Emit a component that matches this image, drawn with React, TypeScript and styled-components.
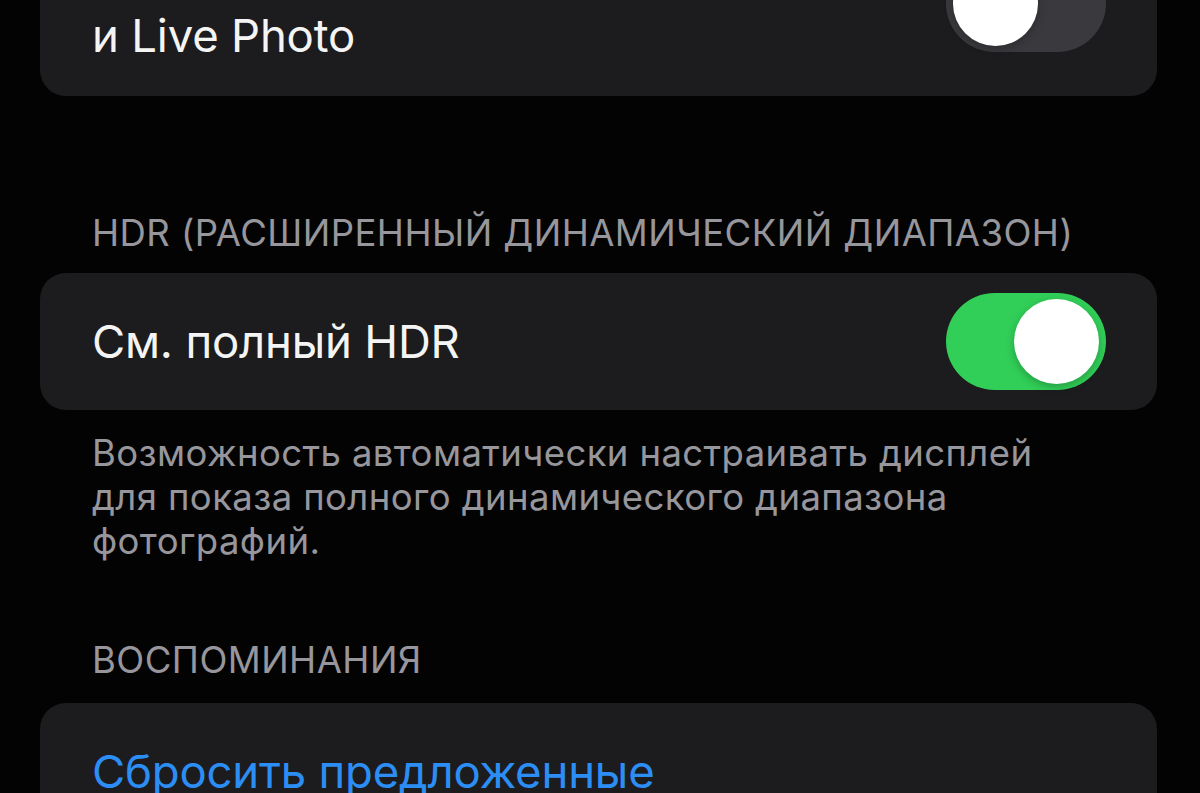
import styled, { createGlobalStyle } from 'styled-components';

const GlobalStyle = createGlobalStyle`
  html, body {
    margin: 0;
    padding: 0;
    background: #030303;
    overflow: hidden;
  }
  body {
    font-family: Inter, "Noto Sans", "Liberation Sans", sans-serif;
    -webkit-font-smoothing: antialiased;
  }
`;

const Screen = styled.div`
  width: 1200px;
  height: 793px;
  overflow: hidden;
  background: #030303;
`;

const List = styled.div`
  display: flex;
  flex-direction: column;
  padding: 0 43px 0 40px;
  margin-top: -89px;
`;

const Card = styled.div`
  background: #1c1c1e;
  border-radius: 26px;
  overflow: hidden;
`;

const Row = styled.div<{ $height: number }>`
  display: flex;
  align-items: center;
  justify-content: space-between;
  min-height: ${(p) => p.$height}px;
  padding: 0 51px 0 52px;
  box-sizing: border-box;
`;

const Label = styled.span<{ $accent?: boolean; $lines?: number }>`
  font-size: 45.5px;
  line-height: ${(p) => ((p.$lines ?? 1) > 1 ? 64 : 58)}px;
  letter-spacing: -0.2px;
  color: ${(p) => (p.$accent ? '#2c8ef4' : '#f4f4f4')};
`;

const SectionHeader = styled.div<{ $top: number }>`
  margin: ${(p) => p.$top}px 0 0 52px;
  font-size: 36.5px;
  line-height: 44px;
  color: #96969c;
  letter-spacing: 0.45px;
  text-transform: uppercase;
`;

const Footer = styled.div`
  margin: 21px 90px 0 52px;
  font-size: 36.5px;
  line-height: 44px;
  color: #96969c;
  letter-spacing: 0.4px;
`;

const Gap = styled.div<{ $size: number }>`
  height: ${(p) => p.$size}px;
`;

const Track = styled.div<{ $on: boolean }>`
  flex: none;
  width: 160px;
  height: 97px;
  border-radius: 49px;
  background: ${(p) => (p.$on ? '#31cf58' : '#3a3a3e')};
  display: flex;
  align-items: center;
  justify-content: ${(p) => (p.$on ? 'flex-end' : 'flex-start')};
  padding: 0 7px;
  box-sizing: border-box;
`;

const Knob = styled.div`
  width: 85px;
  height: 85px;
  border-radius: 50%;
  background: #ffffff;
  box-shadow: 0 3px 8px rgba(0, 0, 0, 0.25);
`;

const Toggle = ({ on }: { on: boolean }) => (
  <Track $on={on}>
    <Knob />
  </Track>
);

export default function App() {
  return (
    <Screen>
      <GlobalStyle />
      <List>
        <Card>
          <Row $height={185}>
            <Label $lines={2}>
              Автовоспроизведение видео
              <br />и Live Photo
            </Label>
            <Toggle on={false} />
          </Row>
        </Card>

        <SectionHeader $top={115}>HDR (расширенный динамический диапазон)</SectionHeader>
        <Gap $size={18} />
        <Card>
          <Row $height={137}>
            <Label>См. полный HDR</Label>
            <Toggle on />
          </Row>
        </Card>
        <Footer>
          Возможность автоматически настраивать дисплей для показа полного динамического диапазона
          фотографий.
        </Footer>

        <SectionHeader $top={75}>Воспоминания</SectionHeader>
        <Gap $size={21} />
        <Card>
          <Row $height={137}>
            <Label $accent>Сбросить предложенные</Label>
          </Row>
        </Card>
      </List>
    </Screen>
  );
}
